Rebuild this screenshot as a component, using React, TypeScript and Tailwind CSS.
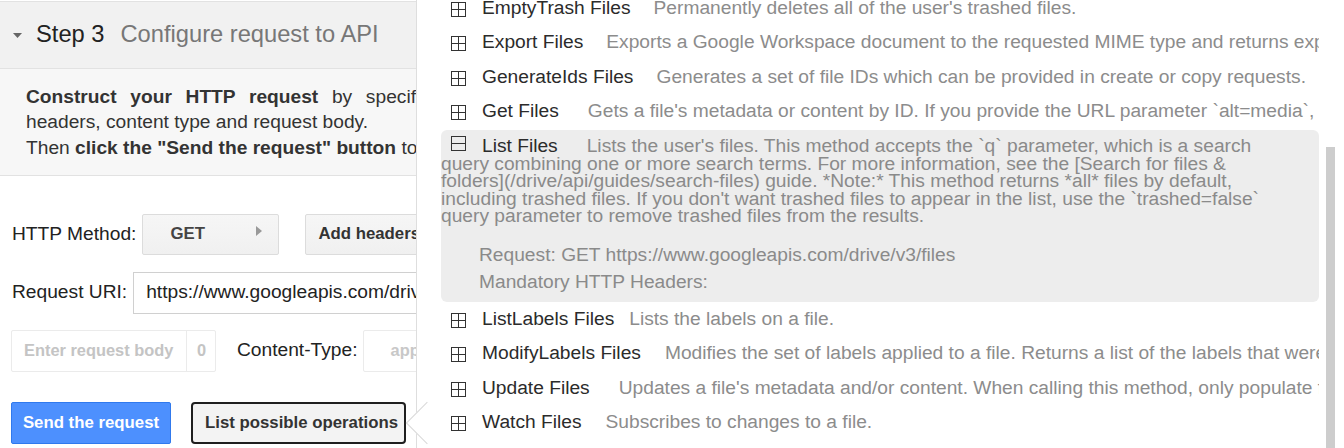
const topOps = [
  { name: "EmptyTrash Files", gap: "ml-[23px]", desc: "Permanently deletes all of the user's trashed files." },
  { name: "Export Files", gap: "ml-[23px]", desc: "Exports a Google Workspace document to the requested MIME type and returns exported byte content. Note that the exported content is limited to 10MB." },
  { name: "GenerateIds Files", gap: "ml-[23px]", desc: "Generates a set of file IDs which can be provided in create or copy requests." },
  { name: "Get Files", gap: "ml-[29px]", desc: "Gets a file's metadata or content by ID. If you provide the URL parameter `alt=media`, then the response includes the file contents in the response body." },
];

const bottomOps = [
  { name: "ListLabels Files", gap: "ml-[15px]", desc: "Lists the labels on a file." },
  { name: "ModifyLabels Files", gap: "ml-[24px]", desc: "Modifies the set of labels applied to a file. Returns a list of the labels that were added or modified." },
  { name: "Update Files", gap: "ml-[29px]", desc: "Updates a file's metadata and/or content. When calling this method, only populate fields in the request that you want to modify." },
  { name: "Watch Files", gap: "ml-[24px]", desc: "Subscribes to changes to a file." },
];

const Glyph = ({ open }: { open?: boolean }) => (
  <svg width="15" height="15" viewBox="0 0 15 15">
    <rect x="0.5" y="0.5" width="14" height="14" fill="none" stroke="#333" />
    <line x1="0.5" y1="7.5" x2="14.5" y2="7.5" stroke="#333" />
    {!open && <line x1="7.5" y1="0.5" x2="7.5" y2="14.5" stroke="#333" />}
  </svg>
);

const OpRow = ({ op }: { op: { name: string; gap: string; desc: string } }) => (
  <div className="h-[34.4px] leading-[34.4px] pl-[10px] whitespace-nowrap overflow-hidden">
    <span className="inline-block align-[-3px]"><Glyph /></span>
    <span className="ml-[16px] text-[#2b2b2b]">{op.name}</span>
    <span className={`${op.gap} text-[#8c8c8c]`}>{op.desc}</span>
  </div>
);

export default function App() {
  return (
    <div className="relative w-[1344px] h-[448px] overflow-hidden bg-white font-['Liberation_Sans',Arial,sans-serif]">
      {/* left: step 3 panel */}
      <div className="w-[716px] pt-[1px]">
        <div className="h-[68px] bg-[#f1f1f1] border-t border-b border-[#e2e2e2] flex items-center pl-[13px]">
          <svg width="9" height="5" viewBox="0 0 9 5" className="mt-[1px]">
            <polygon points="0,0 9,0 4.5,5" fill="#666" />
          </svg>
          <span className="ml-[14px] text-[23.7px] text-[#222]">Step 3</span>
          <span className="ml-[16px] text-[23.7px] text-[#777]">Configure request to API</span>
        </div>
        <div className="bg-[#f7f7f7] border-b border-[#e2e2e2] px-[26px] py-[14.5px] text-[19.2px] leading-[25.5px] text-[#333] text-justify">
          <b>Construct your HTTP request</b> by specifying the HTTP method, URI, headers, content type and request body.
          <br />
          Then <b>click the "Send the request" button</b> to send it.
        </div>

        <div className="pt-[38px] pl-[11px] text-[19.2px] text-[#222]">
          <div className="flex items-center h-[41px]">
            <span className="ml-[1px]">HTTP Method:</span>
            <div className="ml-[6px] w-[137px] h-[41px] flex rounded-[2px] border border-[#dcdcdc] bg-linear-to-b from-[#f6f6f6] to-[#f0f0f0]">
              <span className="self-center pl-[27px] text-[16.8px] font-bold text-[#444]">GET</span>
              <svg width="6" height="10" viewBox="0 0 6 10" className="ml-auto mr-[16px] mt-[11px]">
                <polygon points="0,0 6,5 0,10" fill="#999" />
              </svg>
            </div>
            <div className="ml-[26px] w-[160px] h-[41px] flex items-center rounded-[2px] border border-[#dcdcdc] bg-linear-to-b from-[#f6f6f6] to-[#f0f0f0] pl-[12px] text-[16.8px] font-bold text-[#333] whitespace-nowrap">
              Add headers
            </div>
          </div>

          <div className="flex items-center h-[42px] mt-[17px]">
            <span className="ml-[1px]">Request URI:</span>
            <div className="ml-[6px] w-[560px] h-[42px] flex items-center border border-[#d0d0d0] pl-[12px] whitespace-nowrap">
              https://www.googleapis.com/drive/v3/files
            </div>
          </div>

          <div className="flex items-center h-[42px] mt-[16px]">
            <div className="w-[205px] h-[42px] flex rounded-[2px] border border-[#ebebeb]">
              <span className="w-[174px] self-center pl-[12px] text-[16.4px] font-bold text-[#c4c4c4]">Enter request body</span>
              <span className="border-l border-[#ebebeb] pl-[10px] flex items-center text-[16.4px] font-bold text-[#c4c4c4]">0</span>
            </div>
            <span className="ml-[21px]">Content-Type:</span>
            <div className="ml-[5px] w-[300px] h-[42px] flex items-center rounded-[2px] border border-[#ebebeb] pl-[27px] text-[16.4px] font-bold text-[#c8c8c8]">
              application/json
            </div>
          </div>

          <div className="flex items-center h-[42px] mt-[30px]">
            <button className="w-[160px] h-[42px] rounded-[2px] bg-[#4d90fe] border border-[#3079ed] text-white text-[16.8px] font-bold">
              Send the request
            </button>
            <button className="ml-[20px] w-[215px] h-[42px] rounded-[4px] border-2 border-[#1f1f1f] bg-[#f3f3f3] text-left pl-[12px] text-[16.8px] font-bold text-[#333] whitespace-nowrap">
              List possible operations
            </button>
          </div>
        </div>
      </div>

      {/* operations popover */}
      <div className="absolute left-[416px] top-0 right-0 bottom-0 bg-white border-l border-[#dedede] flex text-[19.2px]">
        <div className="ml-[24px] w-[878px] -mt-[9px]">
          {topOps.map((op) => (
            <OpRow key={op.name} op={op} />
          ))}
          <div className="mt-[1.4px] h-[172px] rounded-[6px] bg-[#ededed] pt-[6.5px] pr-[30px]">
            <div className="leading-[17.4px]">
              <span className="inline-block ml-[10px] align-[1px]"><Glyph open /></span>
              <span className="ml-[16px] text-[#2b2b2b]">List Files</span>
              <span className="ml-[29px] text-[#8a8a8a]">
                Lists the user's files. This method accepts the `q` parameter, which is a search query combining one or more search terms. For more information, see the [Search for files &amp; folders](/drive/api/guides/search-files) guide. *Note:* This method returns *all* files by default, including trashed files. If you don't want trashed files to appear in the list, use the `trashed=false` query parameter to remove trashed files from the results.
              </span>
            </div>
            <div className="mt-[17px] pl-[38px] leading-[27px] text-[#8a8a8a]">
              <div>Request: GET https://www.googleapis.com/drive/v3/files</div>
              <div>Mandatory HTTP Headers:</div>
            </div>
          </div>
          {bottomOps.map((op) => (
            <OpRow key={op.name} op={op} />
          ))}
        </div>
        <div className="ml-[7px] w-[9px]">
          <div className="mt-[147px] h-[400px] bg-[#cdcdcd]" />
        </div>
      </div>

      {/* popover arrow */}
      <div className="absolute left-[412px] top-[408px] w-[30px] h-[30px] rotate-45 bg-white border-l border-b border-[#d8d8d8]" />
    </div>
  );
}
